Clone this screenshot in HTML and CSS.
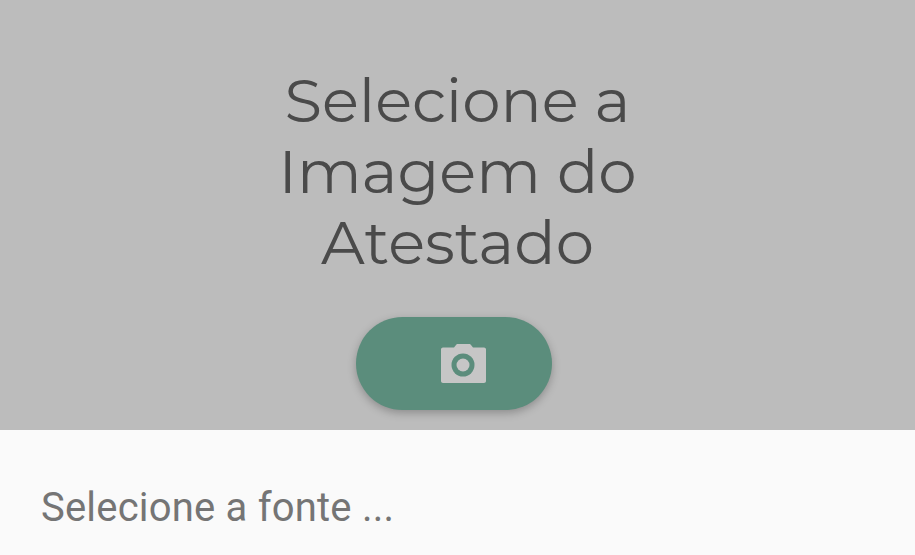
FILE: index.html
```html
<!DOCTYPE html>
<html lang="pt">
<head>
<meta charset="utf-8">
<title>Atestado</title>
<link rel="stylesheet" href="styles.css">
</head>
<body>
<main class="scrim">
  <h1 class="title">Selecione a<br>Imagem do<br>Atestado</h1>
  <button class="fab" type="button" aria-label="Câmera">
    <svg class="cam" viewBox="0 0 45 39" width="45" height="39"><path fill="#c6c6c6" d="M13 3.5 15 1C15.5.4 16 0 17 0h11c1 0 1.500.4 2 1l2 2.500h11c1.100 0 2 .9 2 2V37c0 1.100-.9 2-2 2H2c-1.100 0-2-.9-2-2V5.500c0-1.100.9-2 2-2z"/><circle cx="22" cy="21" r="11.500" fill="#5b8d7c"/><circle cx="22" cy="21" r="6.500" fill="#c6c6c6"/></svg>
  </button>
</main>
<section class="sheet"><p class="sheet-title">Selecione a fonte ...</p></section>
</body>
</html>
```
FILE: styles.css
```css
html,body{margin:0;height:100%;overflow:hidden}
body{width:915px;height:555px;display:flex;flex-direction:column;background:#fafafa}
.scrim{height:430px;background:#bcbcbc;display:flex;flex-direction:column;align-items:center;padding-top:65px;box-sizing:border-box;overflow:hidden}
.title{margin:0;font:400 61px/71px Montserrat,"Open Sans","Noto Sans",sans-serif;color:#4a4a4a;text-align:center}
.fab{flex:none;margin:39px 0 0 -8px;width:196px;height:93px;border:0;border-radius:47px;background:#5b8d7c;box-shadow:0 3px 8px rgba(0,0,0,.25);display:flex;align-items:center;justify-content:center;padding:0 0 0 20px}
.cam{display:block}
.sheet{flex:1;background:#fafafa;padding-top:56px}
.sheet-title{margin:0 0 0 41px;font:400 40px/44px Roboto,sans-serif;letter-spacing:.2px;color:#757575}
```
